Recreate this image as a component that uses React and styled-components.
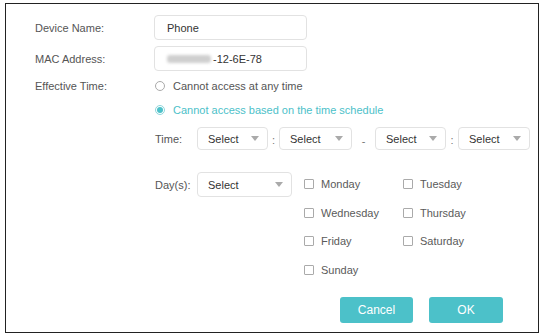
import React from 'react';
import styled, { createGlobalStyle } from 'styled-components';

const GlobalStyle = createGlobalStyle`
	html, body {
		margin: 0;
		padding: 0;
		background: #fff;
	}
	body {
		font-family: 'Liberation Sans', Arial, sans-serif;
		font-size: 11px;
		color: #555;
	}
`;

const TEAL = '#4cc1c9';

const Frame = styled.div`
	box-sizing: border-box;
	margin: 3px 0 0 5px;
	width: 534px;
	height: 330px;
	border: 1.5px solid #222;
	padding: 11px 0 0 29px;
	display: flex;
	flex-direction: column;
`;

const Row = styled.div`
	display: flex;
	align-items: center;
	height: ${(p) => p.h || 25}px;
	margin-top: ${(p) => p.mt || 0}px;
`;

const Label = styled.div`
	width: 119px;
	flex-shrink: 0;
	color: #555;
	font-size: 11px;
`;

const TextBox = styled.div`
	box-sizing: border-box;
	width: 153px;
	height: 25px;
	border: 1px solid #e2e2e2;
	border-radius: 4px;
	padding-left: 12px;
	display: flex;
	align-items: center;
	color: #333;
	font-size: 11px;
`;

/* redacted part of the MAC address */
const Blurred = styled.span`
	display: inline-block;
	width: 44px;
	height: 8px;
	border-radius: 3px;
	background: #cfcfcf;
	filter: blur(1.6px);
	margin-right: 2px;
`;

const Radio = styled.span`
	box-sizing: border-box;
	width: 10px;
	height: 10px;
	border-radius: 50%;
	border: 1px solid ${(p) => (p.checked ? '#8fd6db' : '#aaa')};
	display: inline-flex;
	align-items: center;
	justify-content: center;
	margin: 0 8px 0 1px;
	&::after {
		content: '';
		display: ${(p) => (p.checked ? 'block' : 'none')};
		width: 6px;
		height: 6px;
		border-radius: 50%;
		background: ${TEAL};
	}
`;

const RadioText = styled.span`
	color: ${(p) => (p.active ? TEAL : '#555')};
`;

const SubLabel = styled.div`
	width: 42px;
	flex-shrink: 0;
	color: #555;
	margin-left: 1px;
`;

const SelectBox = styled.div`
	box-sizing: border-box;
	width: ${(p) => p.w || 71}px;
	height: ${(p) => p.h || 23}px;
	border: 1px solid #e2e2e2;
	border-radius: 4px;
	padding: 0 8px 0 10px;
	display: flex;
	align-items: center;
	justify-content: space-between;
	color: #333;
	font-size: 11px;
	flex-shrink: 0;
`;

const Arrow = styled.span`
	width: 0;
	height: 0;
	border-left: 4px solid transparent;
	border-right: 4px solid transparent;
	border-top: 5px solid #aaa;
`;

const Sep = styled.span`
	width: ${(p) => p.w}px;
	text-align: center;
	color: #777;
	flex-shrink: 0;
	padding-top: ${(p) => p.pt || 0}px;
`;

const DaySection = styled.div`
	display: flex;
	align-items: flex-start;
	margin-top: 20px;
`;

const DayHead = styled.div`
	display: flex;
	align-items: center;
	margin-top: 2px;
	height: 25px;
`;

const DayGrid = styled.div`
	display: grid;
	grid-template-columns: 99px 99px;
	grid-auto-rows: 28.5px;
	margin-left: 12px;
`;

const Day = styled.label`
	display: flex;
	align-items: center;
	color: #5a5a5a;
`;

const Box = styled.span`
	box-sizing: border-box;
	width: 10px;
	height: 10px;
	border: 1px solid #aaa;
	border-radius: 1px;
	margin-right: 7px;
`;

const Actions = styled.div`
	display: flex;
	justify-content: flex-end;
	gap: 16px;
	margin-top: 13px;
	padding-right: 35px;
`;

const Button = styled.button`
	width: ${(p) => p.w}px;
	height: 26px;
	border: none;
	border-radius: 3px;
	background: ${TEAL};
	color: #fff;
	font-family: 'Liberation Sans', Arial, sans-serif;
	font-size: 12px;
	padding: 0;
`;

const Select = ({ w, h }) => (
	<SelectBox w={w} h={h}>
		<span>Select</span>
		<Arrow />
	</SelectBox>
);

const days = ['Monday', 'Tuesday', 'Wednesday', 'Thursday', 'Friday', 'Saturday', 'Sunday'];

export default function App() {
	return (
		<>
			<GlobalStyle />
			<Frame>
				<Row>
					<Label>Device Name:</Label>
					<TextBox>Phone</TextBox>
				</Row>
				<Row mt={6}>
					<Label>MAC Address:</Label>
					<TextBox>
						<Blurred />-12-6E-78
					</TextBox>
				</Row>
				<Row h={16} mt={7}>
					<Label>Effective Time:</Label>
					<Radio />
					<RadioText>Cannot access at any time</RadioText>
				</Row>
				<Row h={16} mt={8}>
					<Label />
					<Radio checked />
					<RadioText active>Cannot access based on the time schedule</RadioText>
				</Row>
				<Row h={23} mt={9}>
					<Label />
					<SubLabel>Time:</SubLabel>
					<Select />
					<Sep w={11} pt={3}>:</Sep>
					<Select w={73} />
					<Sep w={23} pt={5}>-</Sep>
					<Select />
					<Sep w={12} pt={3}>:</Sep>
					<Select w={72} />
				</Row>
				<DaySection>
					<Label />
					<DayHead>
						<SubLabel>Day(s):</SubLabel>
						<Select w={95} h={25} />
					</DayHead>
					<DayGrid>
						{days.map((d) => (
							<Day key={d}>
								<Box />
								{d}
							</Day>
						))}
					</DayGrid>
				</DaySection>
				<Actions>
					<Button w={73}>Cancel</Button>
					<Button w={74}>OK</Button>
				</Actions>
			</Frame>
		</>
	);
}
